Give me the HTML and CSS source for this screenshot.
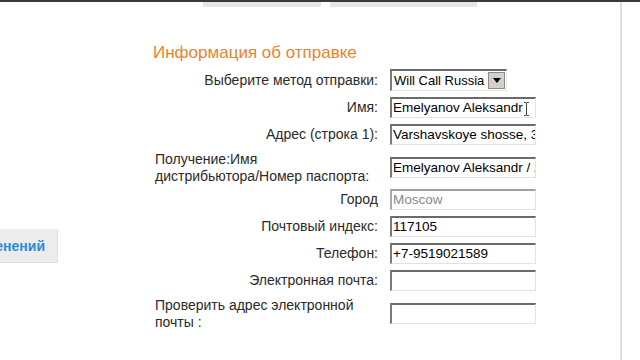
FILE: index.html
```html
<!DOCTYPE html>
<html lang="ru">
<head>
    <meta charset="UTF-8">
    <title>Информация об отправке</title>
    <link rel="stylesheet" href="styles.css">
</head>
<body>
    <div class="topbar">
        <div class="tab tab-one"></div>
        <div class="tab tab-two"></div>
    </div>
    <div class="page">
        <div class="sidebar">
            <div class="save-button"><span>изменений</span></div>
        </div>
        <div class="content">
            <h2 class="title">Информация об отправке</h2>
            <div class="form">
                <label class="label">Выберите метод отправки:</label>
                <div class="select">
                    <span class="select-value">Will Call Russia</span>
                    <span class="select-arrow">
                        <svg width="8" height="5" viewBox="0 0 8 5"><path d="M0 0h8L4 5z" fill="#000"/></svg>
                    </span>
                </div>

                <label class="label">Имя:</label>
                <div class="field">Emelyanov Aleksandr<svg class="cursor" width="7" height="14" viewBox="0 0 7 14"><path d="M1 0.5h2l0.5 0.5l0.5-0.5h2M3.5 1v12M1 13.5h2l0.5-0.5l0.5 0.5h2" stroke="#444" fill="none"/></svg></div>

                <label class="label">Адрес (строка 1):</label>
                <div class="field">Varshavskoye shosse, 35</div>

                <label class="label label-wrap">Получение:Имя<br>дистрибьютора/Номер паспорта:</label>
                <div class="field">Emelyanov Aleksandr / 2</div>

                <label class="label">Город</label>
                <div class="field field-disabled">Moscow</div>

                <label class="label">Почтовый индекс:</label>
                <div class="field">117105</div>

                <label class="label">Телефон:</label>
                <div class="field">+7-9519021589</div>

                <label class="label">Электронная почта:</label>
                <div class="field"></div>

                <label class="label label-wrap">Проверить адрес электронной<br>почты :</label>
                <div class="field"></div>
            </div>
        </div>
        <div class="right-rule"></div>
    </div>
</body>
</html>
```

FILE: styles.css
```css
body {
    margin: 0;
    background-color: #fff;
    font-family: Arial, "Liberation Sans", sans-serif;
    color: #222;
    height: 360px;
    overflow: hidden;
}

.topbar {
    height: 2px;
    background-color: #3a3a3a;
    position: relative;
}

.tab {
    position: absolute;
    top: 2px;
    height: 5px;
    background-color: #e6e6e6;
}

.tab-one {
    left: 203px;
    width: 118px;
}

.tab-two {
    left: 330px;
    width: 147px;
}

.page {
    display: flex;
    height: 358px;
}

.sidebar {
    width: 153px;
    flex-shrink: 0;
    padding-top: 227px;
}

.save-button {
    width: 57px;
    height: 33px;
    background-color: #ececec;
    border-bottom: 1px solid #dcdcdc;
    border-right: 1px solid #e2e2e2;
    display: flex;
    align-items: center;
    justify-content: flex-end;
    overflow: hidden;
    white-space: nowrap;
}

.save-button span {
    color: #2b8bd9;
    font-weight: bold;
    font-size: 14px;
    padding-right: 12px;
}

.content {
    width: 467px;
    flex-shrink: 0;
}

.right-rule {
    width: 2px;
    background-color: #dedede;
}

.title {
    margin: 41px 0 6px 0;
    font-size: 17px;
    font-weight: normal;
    color: #e8832e;
    line-height: 20px;
}

.form {
    display: grid;
    grid-template-columns: 225px 146px;
    column-gap: 12px;
    row-gap: 6px;
    align-items: center;
}

.label {
    font-size: 14px;
    text-align: right;
    line-height: 17px;
    color: #2a2a2a;
}

.label-wrap {
    text-align: left;
    padding-left: 2px;
    margin-bottom: -2px;
}

.field {
    height: 18px;
    line-height: 18px;
    font-size: 13.5px;
    color: #000;
    padding: 0 1px;
    border-top: 2px solid #6a6a6a;
    border-left: 2px solid #7a7a7a;
    border-bottom: 1px solid #e3e3e3;
    border-right: 1px solid #e3e3e3;
    white-space: nowrap;
    overflow: hidden;
    position: relative;
}

.field-disabled {
    color: #8a8a8a;
    border-top-color: #a0a0a0;
    border-left-color: #a8a8a8;
}

.cursor {
    position: absolute;
    left: 131px;
    top: 3px;
}

.select {
    width: 114px;
    height: 19px;
    border-top: 2px solid #6a6a6a;
    border-left: 2px solid #7a7a7a;
    border-bottom: 1px solid #e3e3e3;
    border-right: 1px solid #e3e3e3;
    display: flex;
    align-items: center;
    font-size: 13px;
    color: #000;
}

.select-value {
    flex: 1;
    padding-left: 2px;
    white-space: nowrap;
}

.select-arrow {
    width: 17px;
    height: 17px;
    margin-right: 1px;
    background-color: #d4d0c8;
    border: 1px solid #8a8a8a;
    display: flex;
    align-items: center;
    justify-content: center;
    box-sizing: border-box;
}
```
